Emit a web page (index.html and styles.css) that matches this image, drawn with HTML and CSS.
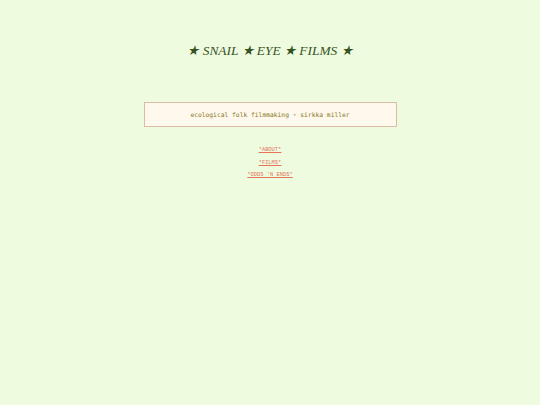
FILE: index.html
```html
<!DOCTYPE html>
<html>
<head>
<meta charset="utf-8">
<link rel="stylesheet" href="styles.css">
</head>
<body>
<div class="page">
  <h1 class="title">★ SNAIL ★ EYE ★ FILMS ★</h1>
  <div class="tagline">ecological folk filmmaking ⋆ sirkka miller</div>
  <nav class="nav">
    <a href="#">*ABOUT*</a>
    <a href="#">*FILMS*</a>
    <a href="#">*ODDS 'N ENDS*</a>
  </nav>
</div>
</body>
</html>
```
FILE: styles.css
```css
html, body {
  margin: 0;
  padding: 0;
  background: #eefbdf;
}
.page {
  display: flex;
  flex-direction: column;
  align-items: center;
  padding-top: 42px;
}
.title {
  margin: 0;
  font-family: "Liberation Serif", serif;
  font-style: italic;
  font-weight: normal;
  font-size: 13.4px;
  line-height: 18px;
  color: #36521f;
}
.tagline {
  margin-top: 42px;
  width: 251px;
  height: 23px;
  display: flex;
  align-items: center;
  justify-content: center;
  background: #fff8ec;
  border: 1px solid #dcbca6;
  font-family: "DejaVu Sans Mono", monospace;
  font-size: 6.3px;
  color: #85771f;
}
.nav {
  margin-top: 20px;
  display: flex;
  flex-direction: column;
  align-items: center;
  gap: 5.5px;
}
.nav a {
  font-family: "Liberation Mono", monospace;
  font-size: 5.4px;
  line-height: 7px;
  color: #e4735a;
  text-decoration: underline;
}
```
